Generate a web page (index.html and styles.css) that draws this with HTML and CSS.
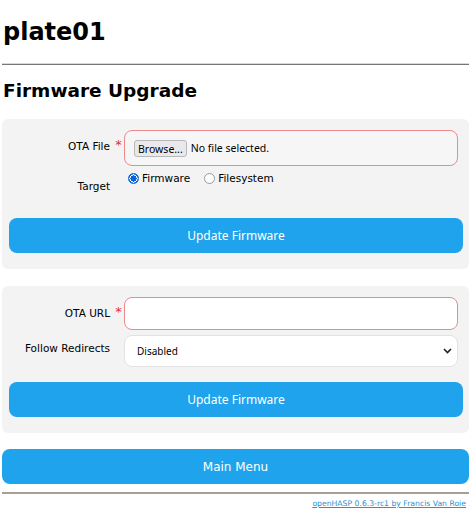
FILE: index.html
```html
<!DOCTYPE html>
<html>
<head>
<meta charset="utf-8">
<title>plate01 - Firmware Upgrade</title>
<link rel="stylesheet" href="styles.css">
</head>
<body>
<h1 class="title">plate01</h1>
<hr class="rule-top">
<h2 class="subtitle">Firmware Upgrade</h2>

<form class="card card-file">
  <div class="row row-file">
    <label class="lbl">OTA File</label>
    <span class="req">*</span>
    <div class="file-box">
      <span class="browse">Browse...</span>
      <span class="file-text">No file selected.</span>
    </div>
  </div>
  <div class="row row-target">
    <label class="lbl lbl-target">Target</label>
    <span class="req-empty"></span>
    <div class="radios">
      <span class="radio-opt"><span class="radio checked"></span>Firmware</span>
      <span class="radio-opt"><span class="radio"></span>Filesystem</span>
    </div>
  </div>
  <button type="button" class="btn btn-form">Update Firmware</button>
</form>

<form class="card card-url">
  <div class="row row-url">
    <label class="lbl">OTA URL</label>
    <span class="req">*</span>
    <div class="url-box"></div>
  </div>
  <div class="row row-select">
    <label class="lbl">Follow Redirects</label>
    <span class="req-empty"></span>
    <div class="select-wrap">
      <div class="select-box">Disabled</div>
      <svg class="chev" width="9" height="6" viewBox="0 0 9 6"><path d="M1 1 L4.5 4.5 L8 1" fill="none" stroke="#222" stroke-width="1.6"/></svg>
    </div>
  </div>
  <button type="button" class="btn btn-form">Update Firmware</button>
</form>

<button type="button" class="btn btn-main">Main Menu</button>
<hr class="rule-bottom">
<div class="footer"><a href="#" class="foot-link">openHASP 0.6.3-rc1 by Francis Van Roie</a></div>
</body>
</html>
```

FILE: styles.css
```css
html, body {
  margin: 0;
  padding: 0;
  background: #fff;
}
body {
  padding: 0 5px 0 2px;
  font-family: "DejaVu Sans", Verdana, sans-serif;
  color: #000;
}
.title {
  font-size: 24px;
  line-height: 30px;
  font-weight: bold;
  margin: 17px 0 0 1px;
}
.rule-top {
  margin: 16px 0 0 0;
  border: 0;
  border-top: 1px solid #d8d8d8;
  border-bottom: 1px solid #777;
  height: 0;
}
.subtitle {
  font-size: 18.5px;
  line-height: 24px;
  font-weight: bold;
  margin: 14px 0 0 1px;
}
.card {
  background: #f3f3f3;
  border-radius: 6px;
  padding: 11px 6px 16px 7px;
  display: flex;
  flex-direction: column;
}
.card-file { margin-top: 16px; }
.card-url { margin-top: 17px; }
.row {
  display: grid;
  grid-template-columns: 101px 14px 1fr;
  align-items: center;
  padding-right: 5px;
}
.lbl {
  font-size: 10.5px;
  text-align: right;
}
.req {
  color: #e03030;
  font-size: 13px;
  text-align: center;
  align-self: start;
  padding-top: 10px;
  padding-left: 3px;
  line-height: 10px;
}
.row-file .lbl { padding-bottom: 4px; }
.file-box {
  height: 36px;
  box-sizing: border-box;
  border: 1px solid #ea8a8a;
  border-radius: 8px;
  background: #f6f6f6;
  display: flex;
  align-items: center;
  padding-left: 9px;
  font-family: "Noto Sans", sans-serif;
  font-size: 10.5px;
}
.browse {
  background: #e9e9ed;
  border: 1px solid #b8b8b8;
  border-radius: 3px;
  padding: 0 3px;
  height: 17px;
  line-height: 16px;
  box-sizing: border-box;
  margin-right: 4px;
}
.row-target {
  align-items: start;
  margin-top: 4px;
  height: 25px;
}
.lbl-target { padding-top: 8px; line-height: 16px; }
.radios {
  display: flex;
  gap: 14px;
  font-size: 10.5px;
  line-height: 16px;
  padding-left: 4px;
}
.radio-opt {
  display: flex;
  align-items: center;
}
.radio {
  width: 9px;
  height: 9px;
  border-radius: 50%;
  border: 1px solid #9a9a9a;
  background: #fff;
  margin-right: 3px;
  box-sizing: content-box;
}
.radio.checked {
  border-color: #0a64d8;
  background: radial-gradient(circle, #0a64d8 0 3px, #fff 3.2px 4px, #0a64d8 4.2px);
}
.btn {
  display: block;
  width: 100%;
  border: 0;
  background: #1fa3ec;
  color: #fff;
  border-radius: 8px;
  height: 35px;
  cursor: pointer;
  padding: 0;
}
.btn-form {
  font-family: "Noto Sans", sans-serif;
  font-size: 12px;
  margin-top: 23px;
}
.card-url .btn-form { margin-top: 15px; }
.url-box {
  height: 33px;
  box-sizing: border-box;
  border: 1px solid #ea8a8a;
  border-radius: 8px;
  background: #fff;
}
.row-url .lbl { padding-bottom: 2px; }
.row-select { margin-top: 5px; }
.row-select .lbl { padding-bottom: 6px; }
.select-wrap { position: relative; }
.select-box {
  height: 32px;
  box-sizing: border-box;
  border: 1px solid #e2e2e2;
  border-radius: 8px;
  background: #fff;
  font-family: "Noto Sans", sans-serif;
  font-size: 10px;
  line-height: 30px;
  padding-left: 12px;
}
.chev {
  position: absolute;
  right: 6px;
  top: 13px;
}
.btn-main {
  margin-top: 16px;
  font-family: "DejaVu Sans", Verdana, sans-serif;
  font-size: 12px;
}
.rule-bottom {
  margin: 8px 0 0 0;
  border: 0;
  height: 2px;
  background: #a79f95;
}
.footer {
  text-align: right;
  padding-right: 3px;
  margin-top: 5px;
  font-size: 7.7px;
  line-height: 10px;
}
.foot-link {
  color: #2f8fd0;
  text-decoration: underline;
}
```
